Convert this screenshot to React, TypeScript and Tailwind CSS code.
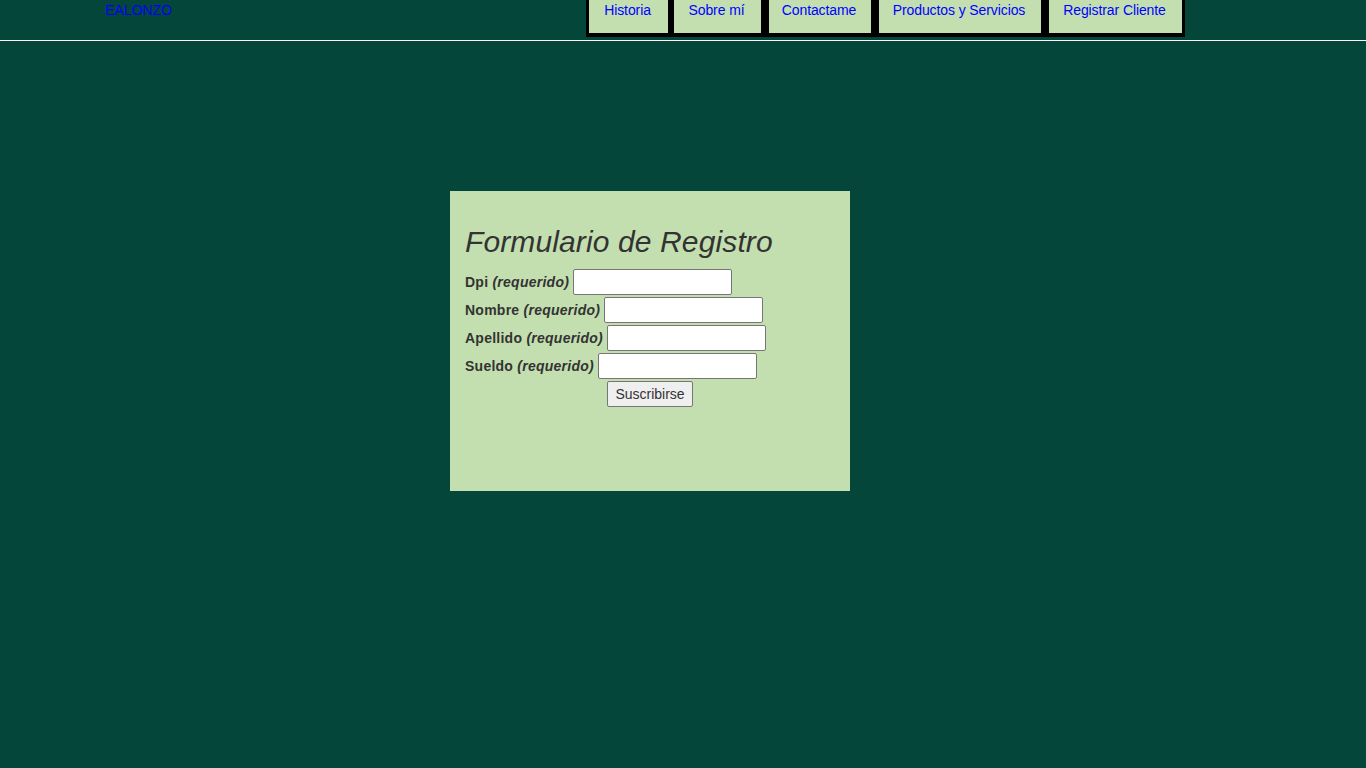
import React from "react";

const navItems: { label: string; w: string }[] = [
  { label: "Historia", w: "w-[79px]" },
  { label: "Sobre mí", w: "w-[87px]" },
  { label: "Contactame", w: "w-[102px]" },
  { label: "Productos y Servicios", w: "w-[162px]" },
  { label: "Registrar Cliente", w: "w-[133px]" },
];

const fields = [
  { name: "Dpi" },
  { name: "Nombre" },
  { name: "Apellido" },
  { name: "Sueldo" },
];

export default function App() {
  return (
    <div
      className="min-h-[768px] w-full bg-[#05463a]"
      style={{ fontFamily: '"Liberation Sans", Arial, sans-serif' }}
    >
      <header className="flex h-[41px] border-b border-white">
        <div className="w-[586px] shrink-0 pl-[105px] pt-[2px] text-[14px] leading-[16px] text-[#0000ff]">
          EALONZO
        </div>
        <nav className="flex h-[37px] bg-black pl-[3px] pr-[3px] pb-[4px]">
          {navItems.map((item, i) => (
            <a
              key={item.label}
              className={`${item.w} ${i === 1 ? "ml-[6px]" : i > 1 ? "ml-[8px]" : ""} flex justify-center bg-[#c3dfb0] pt-[2px] pr-[2px] text-[14px] leading-[16px] tracking-[-0.1px] text-[#0000ff]`}
            >
              {item.label}
            </a>
          ))}
        </nav>
      </header>

      <div className="ml-[450px] mt-[150px] h-[300px] w-[400px] bg-[#c3dfb0] px-[15px] pt-[34px] text-[#333333]">
        <h1 className="text-[30px] italic leading-[34px] tracking-[0.12px]">Formulario de Registro</h1>
        <div className="mt-[9px] flex flex-col">
          {fields.map((f) => (
            <div key={f.name} className="flex h-[28px] items-center gap-[4px]">
              <span className="text-[14px] font-bold leading-[16px] tracking-[0.25px]">
                {f.name} <em className="italic">(requerido)</em>
              </span>
              <input
                type="text"
                className="h-[26px] w-[159px] rounded-[2px] border border-[#767676] bg-white"
              />
            </div>
          ))}
          <div className="flex h-[28px] items-center justify-center">
            <button className="h-[26px] w-[86px] rounded-[2px] border border-[#767676] bg-[#efefef] text-[14px] leading-[16px] text-[#333333]">
              Suscribirse
            </button>
          </div>
        </div>
      </div>
    </div>
  );
}
